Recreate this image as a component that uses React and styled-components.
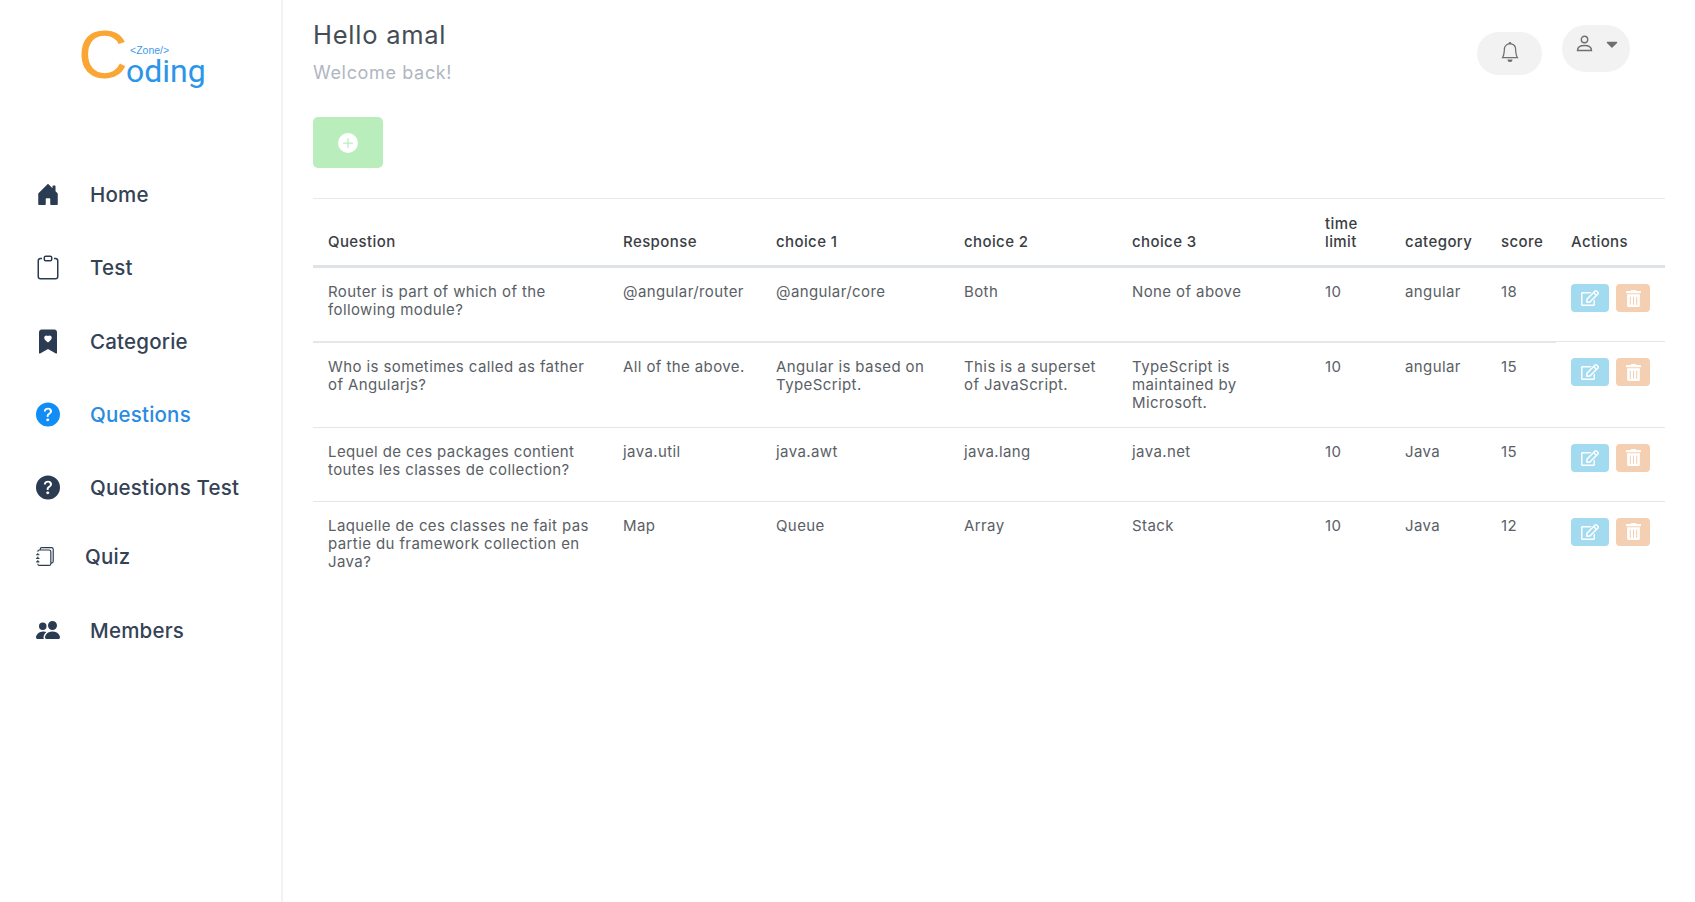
import React from "react";
import styled, { createGlobalStyle } from "styled-components";
import { FaRegEdit, FaTrashAlt, FaCaretDown } from "react-icons/fa";
import {
  BsJournals, BsBell, BsPlusCircleFill, BsHouseDoorFill, BsClipboard,
  BsBookmarkHeartFill, BsQuestionCircleFill, BsPeopleFill,
} from "react-icons/bs";

const Global = createGlobalStyle`
  html, body { margin: 0; padding: 0; background: #fff; }
  body { font-family: Inter, "Liberation Sans", sans-serif; color: #343a40; }
`;

const Page = styled.div`
  display: flex;
  min-height: 902px;
  width: 1695px;
`;

const Sidebar = styled.aside`
  width: 283px;
  flex: none;
  box-sizing: border-box;
  border-right: 2px solid #f2f2f2;
`;

const Logo = styled.div`
  display: flex;
  align-items: flex-end;
  height: 90px;
  padding: 0 0 0 78px;
  font-family: Roboto, sans-serif;
  line-height: 1;
`;

const LogoC = styled.span`
  font-family: "Liberation Sans", sans-serif;
  font-size: 69px;
  color: #f9a634;
  line-height: 68px;
  height: 68px;
  margin-bottom: 1px;
  width: 48px;
  overflow: visible;
`;

const LogoRest = styled.div`
  display: flex;
  flex-direction: column;
  margin-bottom: 3px;
`;

const LogoZone = styled.span`
  font-family: "Liberation Sans", sans-serif;
  font-size: 10.5px;
  color: #3f9ae8;
  margin-left: 4px;
  line-height: 10px;
`;

const LogoWord = styled.span`
  font-size: 32px;
  color: #2b95ea;
  line-height: 32px;
  height: 32px;
`;

const Nav = styled.nav`
  display: flex;
  flex-direction: column;
  padding: 68px 0 0 36px;
`;

const NavItem = styled.a`
  display: flex;
  align-items: center;
  height: ${p => p.$h || 73.3}px;
  font-size: 20.5px;
  font-weight: 500;
  letter-spacing: 0.2px;
  color: ${p => (p.$active ? "#2b8ae2" : "#344256")};
  cursor: pointer;
`;

const NavIcon = styled.span`
  display: flex;
  align-items: center;
  justify-content: center;
  width: ${p => p.$w || 24}px;
  margin-right: ${p => p.$gap || 30}px;
  color: ${p => (p.$active ? "#118df5" : "#2a3b52")};
  font-size: ${p => p.$size || 24}px;
`;

const Main = styled.main`
  flex: 1;
  min-width: 0;
  padding: 0 30px 0 30px;
`;

const Header = styled.header`
  display: flex;
  justify-content: space-between;
  height: 117px;
`;

const Greeting = styled.div`
  padding-top: 20px;
`;

const Hello = styled.h1`
  margin: 0;
  font-size: 25.5px;
  font-weight: 400;
  letter-spacing: 0.75px;
  line-height: 30px;
  color: #454c55;
`;

const Welcome = styled.p`
  margin: 12px 0 0;
  font-size: 18px;
  font-weight: 400;
  letter-spacing: 0.65px;
  line-height: 22px;
  color: #b0b6bf;
`;

const HeaderActions = styled.div`
  display: flex;
  align-items: flex-start;
  gap: 20px;
  padding-right: 35px;
`;

const Pill = styled.button`
  display: flex;
  align-items: center;
  justify-content: center;
  border: 0;
  background: #f2f2f2;
  color: #6f6f6f;
  border-radius: 24px;
  width: ${p => p.$w}px;
  height: ${p => p.$h}px;
  margin-top: ${p => p.$top}px;
  padding: 0;
`;

const BellInner = styled.span`
  display: flex;
  margin-top: -3px;
`;

const UserInner = styled.span`
  display: flex;
  align-items: center;
  gap: 10px;
  margin-top: -10px;
  margin-left: 4px;
`;

const AddButton = styled.button`
  display: flex;
  align-items: center;
  justify-content: center;
  width: 70px;
  height: 51px;
  border: 0;
  border-radius: 5px;
  background: #b9eebc;
  color: #fff;
  font-size: 20px;
  padding: 0;
`;

const Divider = styled.hr`
  margin: 30px 0 0;
  border: 0;
  border-top: 1px solid #e9e9e9;
`;

const Table = styled.table`
  width: 1352px;
  table-layout: fixed;
  border-collapse: collapse;
  margin-top: 16px;
  font-size: 15px;
  letter-spacing: 0.4px;

  tbody tr:nth-child(2) td:not(:last-child) {
    border-top-width: 2px;
  }
`;

const Th = styled.th`
  text-align: left;
  vertical-align: bottom;
  font-weight: 500;
  color: #3a3e43;
  line-height: 18px;
  padding: 0 15px 14px;
  border-bottom: 3px solid #dfe2e6;
  height: 30px;
`;

const Td = styled.td`
  vertical-align: top;
  font-weight: 400;
  color: #5a6065;
  line-height: 18px;
  padding: 15px;
  border-top: 1px solid #e4e6e9;
`;

const ActionCell = styled(Td)`
  padding: 16px 15px 0;
  height: 57px;
`;

const Actions = styled.div`
  display: flex;
  gap: 7px;
`;

const IconButton = styled.button`
  display: flex;
  align-items: center;
  justify-content: center;
  height: 28px;
  width: ${p => p.$w}px;
  border: 0;
  border-radius: 4px;
  background: ${p => p.$bg};
  color: #fff;
  font-size: ${p => p.$size}px;
  padding: 0;
`;

const columns = [
  ["Question", 295], ["Response", 153], ["choice 1", 188], ["choice 2", 168],
  ["choice 3", 193], ["time limit", 80], ["category", 96], ["score", 70], ["Actions", 109],
];

const rows = [
  ["Router is part of which of the following module?", "@angular/router", "@angular/core", "Both", "None of above", "10", "angular", "18"],
  ["Who is sometimes called as father of Angularjs?", "All of the above.", "Angular is based on TypeScript.", "This is a superset of JavaScript.", "TypeScript is maintained by Microsoft.", "10", "angular", "15"],
  ["Lequel de ces packages contient toutes les classes de collection?", "java.util", "java.awt", "java.lang", "java.net", "10", "Java", "15"],
  ["Laquelle de ces classes ne fait pas partie du framework collection en Java?", "Map", "Queue", "Array", "Stack", "10", "Java", "12"],
];

const nav = [
  { label: "Home", icon: <BsHouseDoorFill />, size: 25 },
  { label: "Test", icon: <BsClipboard />, size: 25 },
  { label: "Categorie", icon: <BsBookmarkHeartFill />, size: 27 },
  { label: "Questions", icon: <BsQuestionCircleFill />, size: 25, active: true },
  { label: "Questions Test", icon: <BsQuestionCircleFill />, size: 25 },
  { label: "Quiz", icon: <BsJournals />, size: 19, w: 19, gap: 30, h: 65 },
  { label: "Members", icon: <BsPeopleFill />, size: 26, h: 82 },
];

const PersonIcon = () => (
  <svg width="17" height="17" viewBox="0 0 17 17" fill="none" stroke="currentColor" strokeWidth="1.4">
    <circle cx="8.5" cy="4.5" r="3.2" />
    <path d="M1.500 15.500c0-3.600 3-5 7-5s7 1.400 7 5z" />
  </svg>
);

export default function App() {
  return (
    <Page>
      <Global />
      <Sidebar>
        <Logo>
          <LogoC>C</LogoC>
          <LogoRest>
            <LogoZone>&lt;Zone/&gt;</LogoZone>
            <LogoWord>oding</LogoWord>
          </LogoRest>
        </Logo>
        <Nav>
          {nav.map(n => (
            <NavItem key={n.label} $active={n.active} $h={n.h}>
              <NavIcon $active={n.active} $size={n.size} $w={n.w} $gap={n.gap}>{n.icon}</NavIcon>
              {n.label}
            </NavItem>
          ))}
        </Nav>
      </Sidebar>
      <Main>
        <Header>
          <Greeting>
            <Hello>Hello amal</Hello>
            <Welcome>Welcome back!</Welcome>
          </Greeting>
          <HeaderActions>
            <Pill $w={65} $h={43} $top={32}><BellInner><BsBell size={20} /></BellInner></Pill>
            <Pill $w={68} $h={47} $top={25}>
              <UserInner><PersonIcon /><FaCaretDown size={18} /></UserInner>
            </Pill>
          </HeaderActions>
        </Header>
        <AddButton aria-label="Add"><BsPlusCircleFill /></AddButton>
        <Divider />
        <Table>
          <colgroup>
            {columns.map(([c, w]) => <col key={c} width={w} />)}
          </colgroup>
          <thead>
            <tr>{columns.map(([c]) => <Th key={c}>{c}</Th>)}</tr>
          </thead>
          <tbody>
            {rows.map(r => (
              <tr key={r[0]}>
                {r.map((v, i) => <Td key={i}>{v}</Td>)}
                <ActionCell>
                  <Actions>
                    <IconButton $w={38} $bg="#a2dbef" $size={18}><FaRegEdit /></IconButton>
                    <IconButton $w={34} $bg="#f5cfb2" $size={17}><FaTrashAlt /></IconButton>
                  </Actions>
                </ActionCell>
              </tr>
            ))}
          </tbody>
        </Table>
      </Main>
    </Page>
  );
}
